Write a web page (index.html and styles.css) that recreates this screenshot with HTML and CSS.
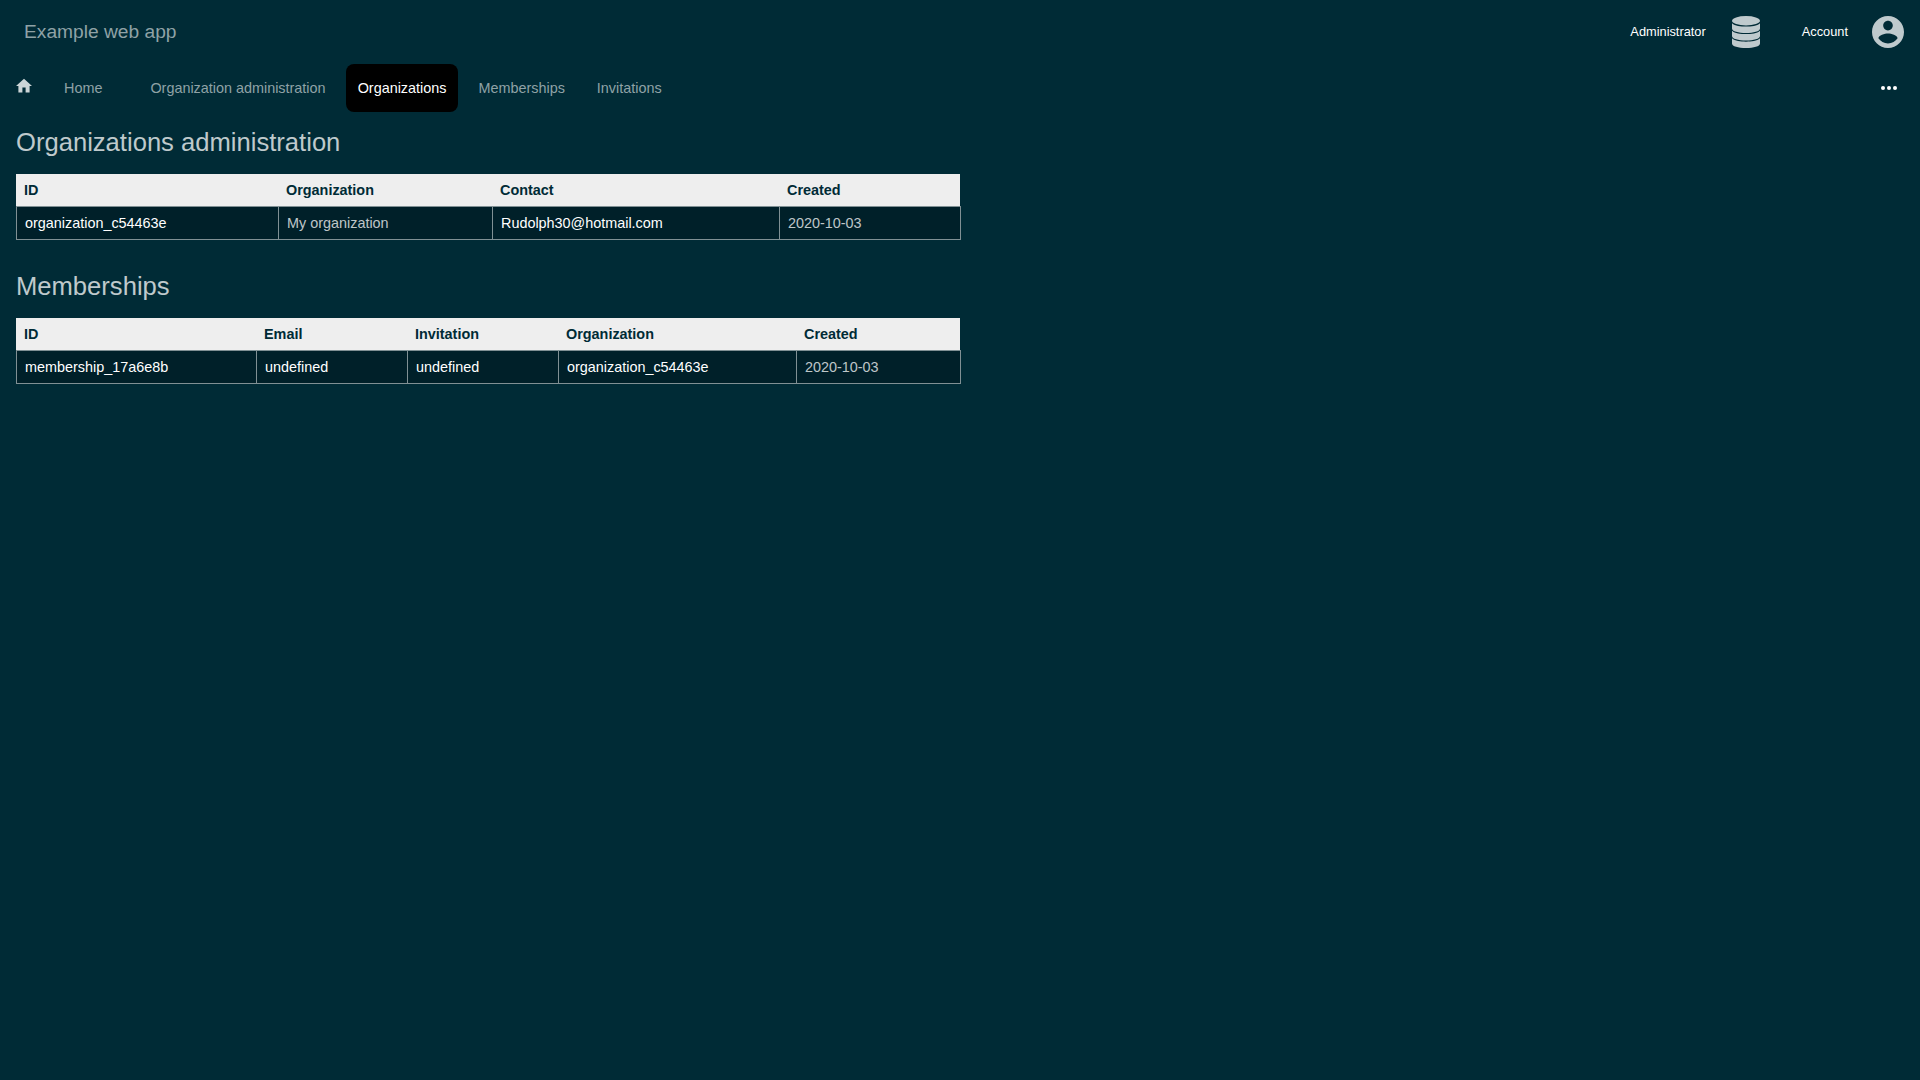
FILE: index.html
```html
<!DOCTYPE html>
<html lang="en">
<head>
<meta charset="utf-8">
<title>Organizations administration</title>
<link rel="stylesheet" href="styles.css">
</head>
<body>
<header class="header">
  <a class="brand">Example web app</a>
  <div class="menus">
    <div class="menu"><span>Administrator</span>
      <svg class="menu-icon" viewBox="0 0 32 32"><ellipse cx="16" cy="4.700" rx="14" ry="4.700"/><path id="disk" d="M2 7.200C5 9.800 10.500 10.600 16 10.600S27 9.800 30 7.200V12.400C30 15.200 23.700 16.900 16 16.900S2 15.200 2 12.400z"/><use href="#disk" y="7.500"/><use href="#disk" y="15.100"/></svg>
    </div>
    <div class="menu"><span>Account</span>
      <svg class="menu-icon" viewBox="2 2 20 20"><path d="M12 2C6.480 2 2 6.480 2 12s4.480 10 10 10 10-4.480 10-10S17.520 2 12 2zm0 3c1.660 0 3 1.340 3 3s-1.340 3-3 3-3-1.340-3-3 1.340-3 3-3zm0 14.200c-2.500 0-4.710-1.280-6-3.220.03-1.990 4-3.080 6-3.080 1.990 0 5.970 1.090 6 3.080-1.290 1.940-3.500 3.220-6 3.220z"/></svg>
    </div>
  </div>
</header>
<nav class="navbar">
  <svg class="home-icon" viewBox="2 2 20 20"><path d="M10 20v-6h4v6h5v-8h3L12 3 2 12h3v8z"/></svg>
  <a class="crumb">Home</a>
  <a class="section">Organization administration</a>
  <a class="tab active">Organizations</a>
  <a class="tab">Memberships</a>
  <a class="tab">Invitations</a>
  <svg class="more" viewBox="0 0 16 4"><circle cx="2" cy="2" r="2"/><circle cx="8" cy="2" r="2"/><circle cx="14" cy="2" r="2"/></svg>
</nav>
<main class="content">
  <section class="block">
    <h2>Organizations administration</h2>
    <div class="table organizations" role="table">
      <div class="row head" role="row"><span>ID</span><span>Organization</span><span>Contact</span><span>Created</span></div>
      <div class="row data" role="row"><a>organization_c54463e</a><span>My organization</span><a>Rudolph30@hotmail.com</a><span>2020-10-03</span></div>
    </div>
  </section>
  <section class="block">
    <h2>Memberships</h2>
    <div class="table memberships" role="table">
      <div class="row head" role="row"><span>ID</span><span>Email</span><span>Invitation</span><span>Organization</span><span>Created</span></div>
      <div class="row data" role="row"><a>membership_17a6e8b</a><a>undefined</a><a>undefined</a><a>organization_c54463e</a><span>2020-10-03</span></div>
    </div>
  </section>
</main>
</body>
</html>
```
FILE: styles.css
```css
* { box-sizing: border-box; }
body {
  margin: 0;
  background: #002b36;
  color: rgba(255, 255, 255, .75);
  font: 14.4px/16px "Liberation Sans", Arial, sans-serif;
}
.header {
  display: flex;
  justify-content: space-between;
  align-items: center;
  height: 64px;
  padding: 0 16px 0 24px;
}
.brand { font-size: 19.2px; line-height: 22px; color: #8fa2a6; }
.menus { display: flex; gap: 40px; }
.menu { display: flex; align-items: center; gap: 24px; font-size: 12.8px; color: #fff; }
.menu-icon { width: 32px; height: 32px; fill: #bfcacd; }
.navbar {
  display: flex;
  align-items: center;
  height: 48px;
  padding: 0 23px 0 16px;
  color: #8fa2a6;
}
.home-icon { width: 16px; height: 16px; margin: 0 32px 4px 0; fill: #ccd5d7; }
.crumb { margin-right: 48px; }
.section { margin-right: 20.600px; }
.tab { padding: 16px 11.500px; margin-right: 9px; border-radius: 8px; }
.tab.active { background: #000; color: #fff; }
.more { width: 16px; height: 4px; margin-left: auto; fill: #fff; }
.content { padding: 0 16px; }
.block { height: 144px; }
h2 {
  margin: 0;
  padding: 16px 0 17px;
  font-size: 25.6px;
  line-height: 29px;
  font-weight: 400;
}
.table { width: 945px; }
.row { display: grid; }
.organizations .row { grid-template-columns: 262px 214px 287px 1fr; }
.memberships .row { grid-template-columns: 240px 151px 151px 238px 1fr; }
.head {
  width: 944px;
  background: #eee;
  color: #002b36;
  font-weight: 700;
}
.row > * { padding: 8px; }
.data > * {
  border: 1px solid rgba(255, 255, 255, .5);
  border-right-width: 0;
  background: #002029;
}
.data > :last-child { border-right-width: 1px; }
.data a { color: #fff; }
```
